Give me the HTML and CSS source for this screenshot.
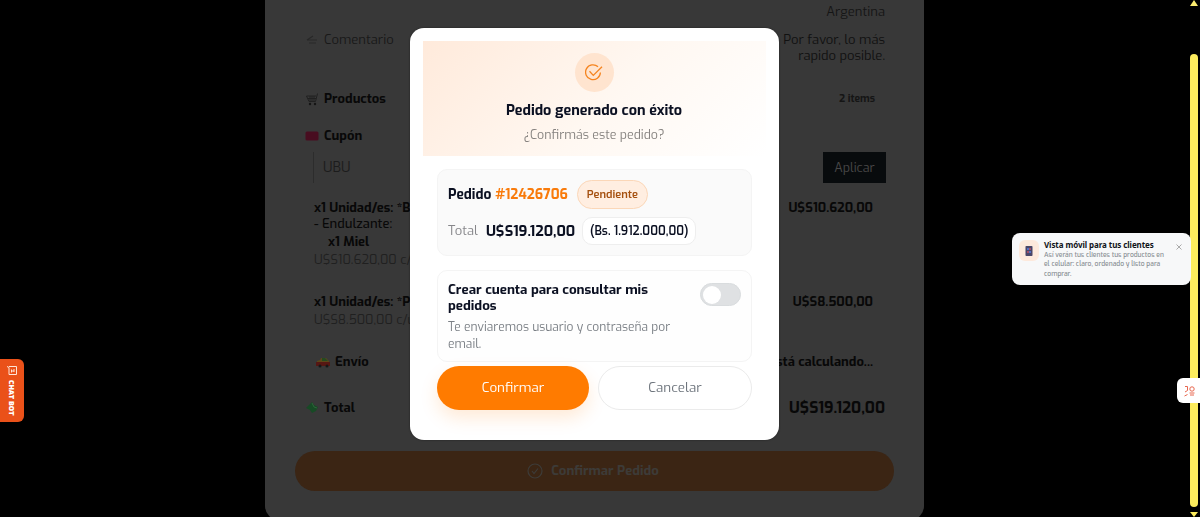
FILE: index.html
```html
<!doctype html>
<html lang="es">
  <head>
    <meta charset="UTF-8" />
    <meta name="viewport" content="width=device-width, initial-scale=1" />
    <title>Confirmar pedido</title>
    <link rel="stylesheet" href="styles.css">
  </head>
  <body>
    <!-- Resumen del pedido -->
    <main class="sheet">
      <div class="row row-address"><span>Argentina</span></div>
      <div class="row row-comment">
        <div class="label light">
          <svg class="icon" viewBox="0 0 14 14"><path d="M2 7l6-4M2 7h10M4 10h7" stroke="#282828" stroke-width="1.2" fill="none" /></svg>
          <span class="comment-label">Comentario</span>
        </div>
        <div class="comment-value">Por favor, lo más<br>rapido posible.</div>
      </div>
      <div class="row row-products">
        <div class="label">
          <svg class="icon" viewBox="0 0 14 14"><path d="M12.500 1.500l-2 8H4L1.500 4H11M3 6.500h8M5 4v5M7 4v5M9 4v5" stroke="#202020" fill="none" /><circle cx="5" cy="12" r="1.200" fill="#151515" /><circle cx="10" cy="12" r="1.200" fill="#151515" /></svg>
          <span class="products-label">Productos</span>
        </div>
        <span class="count">2 items</span>
      </div>
      <div class="row row-coupon">
        <div class="label">
          <svg class="icon" viewBox="0 0 14 14"><rect x=".5" y="2.500" width="13" height="9" rx="1.500" fill="#480d20" /></svg>
          <span class="coupon-label">Cupón</span>
        </div>
      </div>
      <div class="coupon">
        <span class="coupon-input">UBU</span>
        <span class="coupon-btn">Aplicar</span>
      </div>
      <div class="item item-first">
        <div class="item-info">
          <div class="item-name">x1 Unidad/es: *Budín</div>
          <div class="item-extra">- Endulzante:</div>
          <div class="item-option">x1 Miel</div>
          <div class="item-unit">U$S10.620,00 c/u</div>
        </div>
        <div class="item-price">U$S10.620,00</div>
      </div>
      <div class="item item-second">
        <div class="item-info">
          <div class="item-name">x1 Unidad/es: *Pan</div>
          <div class="item-unit">U$S8.500,00 c/u</div>
        </div>
        <div class="item-price">U$S8.500,00</div>
      </div>
      <div class="row row-shipping">
        <div class="label">
          <svg class="icon" viewBox="0 0 14 14"><path d="M1 6l3-1 1-2h5l3 3v2H1z" fill="#5d4718" /><path d="M6 3h3l3 3H6z" fill="#244a20" /><path d="M0 7h14v4H0z" fill="#561713" /><circle cx="4" cy="11" r="1.500" fill="#171717" /><circle cx="11" cy="11" r="1.500" fill="#171717" /></svg>
          <span class="shipping-label">Envío</span>
        </div>
        <span class="shipping-value">Se está calculando...</span>
      </div>
      <div class="row row-total">
        <div class="label">
          <svg class="icon" viewBox="0 0 14 14"><path d="M1 7l6-6 2 3 4 2-2 4-4 2-2-3z" fill="#174a25" /><path d="M7 2l2 4 3 1" stroke="#2d6539" fill="none" /></svg>
          <span class="total-label">Total</span>
        </div>
        <span class="total-value">U$S19.120,00</span>
      </div>
      <div class="submit">
        <svg class="submit-icon" viewBox="0 0 16 16"><circle cx="8" cy="8" r="7" /><path d="M5 8l2 2.500 4-5" /></svg>
        <span>Confirmar Pedido</span>
      </div>
    </main>

    <!-- Modal -->
    <div class="modal">
      <div class="hero">
        <div class="hero-icon">
          <svg viewBox="0 0 18 18"><path d="M13 2.800A7.400 7.400 0 1 0 15.400 8.500" /><path d="M4.500 7.200l3.800 4.200 8.700-8.600" /></svg>
        </div>
        <h2 class="hero-title">Pedido generado con éxito</h2>
        <p class="hero-text">¿Confirmás este pedido?</p>
      </div>
      <div class="modal-body">
        <div class="card order">
          <div class="order-row">
            <span class="order-name">Pedido</span>
            <span class="order-id">#12426706</span>
            <span class="badge">Pendiente</span>
          </div>
          <div class="order-row order-amount">
            <span class="amount-label">Total</span>
            <span class="amount">U$S19.120,00</span>
            <span class="converted">(Bs. 1.912.000,00)</span>
          </div>
        </div>
        <div class="card account">
          <div>
            <div class="account-title">Crear cuenta para consultar mis<br>pedidos</div>
            <div class="account-text">Te enviaremos usuario y contraseña por<br>email.</div>
          </div>
          <div class="switch"><div class="knob"></div></div>
        </div>
        <div class="actions">
          <button type="button" class="btn btn-primary">Confirmar</button>
          <button type="button" class="btn">Cancelar</button>
        </div>
      </div>
    </div>

    <!-- Barra de scroll -->
    <div class="scrollbar">
      <div class="arrow-up"></div>
      <div class="thumb"></div>
      <div class="arrow-down"></div>
    </div>

    <!-- Aviso flotante -->
    <div class="toast">
      <div class="toast-icon">
        <svg viewBox="0 0 8 10"><rect x=".5" width="7" height="10" rx=".8" fill="#4a4668" /><path d="M2 2h2v2H2zM4 5h2v2H4z" fill="#526fc4" /><path d="M4 2h2v2H4zM2 5h2v2H2z" fill="#a34e65" /></svg>
      </div>
      <div class="toast-content">
        <div class="toast-title">Vista móvil para tus clientes</div>
        <div class="toast-text">Así verán tus clientes tus productos en<br>el celular: claro, ordenado y listo para<br>comprar.</div>
      </div>
      <svg class="toast-close" viewBox="0 0 6 6"><path d="M.5.5l5 5M5.500.5l-5 5" /></svg>
    </div>

    <div class="chat">
      <svg class="chat-icon" viewBox="0 0 12 12"><path d="M1 1.500l2 1v7h7.500v-8H3M5.500 4.500v3M8 4v3M5.500 6H8" /></svg>
      <span class="chat-text">CHAT BOT</span>
    </div>

    <div class="side-tab">
      <svg viewBox="0 0 12 12"><path d="M1 1.500h2.500v4L1 7M.5 11l3-1.500" /><circle cx="8" cy="4" r="2.200" /><path d="M5.500 8h5M6 10h4" /></svg>
    </div>
  </body>
</html>
```

FILE: styles.css
```css
* {
  box-sizing: border-box;
}
body {
  margin: 0;
  height: 517px;
  overflow: hidden;
  background: #000;
  font-family: Exo, "Exo 2", Roboto, sans-serif;
  font-size: 13px;
  line-height: 16px;
  color: #080808;
}
span,
.item-name,
.item-unit {
  white-space: nowrap;
}

/* resumen */
.sheet {
  width: 659px;
  height: 520px;
  margin-left: 265px;
  padding: 4px 30px 0;
  background: #383838;
  border-radius: 0 0 14px 14px;
}
.row {
  display: flex;
  justify-content: space-between;
  align-items: flex-start;
  padding: 0 9px 0 10px;
}
.label {
  display: flex;
  align-items: center;
  gap: 5px;
  font-weight: 700;
}
.light {
  font-weight: 400;
  color: #191919;
}
.icon {
  width: 14px;
  height: 14px;
}
.row-address {
  justify-content: flex-end;
  height: 28px;
  color: #151515;
}
.row-comment {
  height: 59px;
}
.comment-value {
  text-align: right;
  color: #111;
}
.row-products {
  height: 37px;
}
.count {
  padding-right: 10px;
  font-size: 10.4px;
  font-weight: 700;
  line-height: 15px;
  color: #151515;
}
.row-coupon {
  height: 24px;
}
.coupon {
  display: flex;
  justify-content: space-between;
  height: 31px;
  margin: 0 8px 0 18px;
  border-left: 1px solid #2c2c2c;
}
.coupon-input {
  padding-left: 9px;
  font-size: 14px;
  line-height: 32px;
  color: #1c1c1c;
}
.coupon-btn {
  width: 63px;
  background: #080b0d;
  color: #484848;
  font-size: 12.6px;
  line-height: 31px;
  text-align: center;
}
.item {
  display: flex;
  justify-content: space-between;
  padding: 0 21px 0 19px;
}
.item-first {
  height: 94px;
  margin-top: 17px;
}
.item-second {
  height: 60px;
}
.item-name,
.item-price {
  font-weight: 700;
}
.item-extra {
  font-weight: 500;
}
.item-option {
  margin-top: 2px;
  padding-left: 14px;
  font-weight: 700;
}
.item-unit {
  margin-top: 2px;
  font-size: 12.8px;
  color: #202020;
}
.row-shipping {
  height: 46px;
  padding: 0 21px;
}
.shipping-value,
.total-value {
  font-weight: 700;
}
.row-total {
  height: 51px;
}
.total-value {
  font-size: 15.6px;
}
.submit {
  display: flex;
  justify-content: center;
  align-items: center;
  gap: 8px;
  height: 40px;
  padding-right: 3px;
  border-radius: 20px;
  background: #3b2514;
  color: #3d3b38;
  font-size: 13.2px;
  font-weight: 700;
}
.submit-icon {
  width: 16px;
  height: 16px;
  fill: none;
  stroke: #3d3b38;
  stroke-width: 1.2;
}

/* modal */
.modal {
  position: fixed;
  top: 28px;
  left: 410px;
  width: 369px;
  height: 412px;
  padding: 13px;
  background: #fff;
  border-radius: 14px;
  box-shadow: 0 0 2px rgba(0, 0, 0, 0.5);
  color: #0b1022;
}
.hero {
  display: flex;
  flex-direction: column;
  align-items: center;
  height: 115px;
  padding: 12px 1px 0 0;
  background: linear-gradient(135deg, #ffeadb, #fff8f2 55%, #fff);
}
.hero-icon {
  display: flex;
  align-items: center;
  justify-content: center;
  width: 39px;
  height: 39px;
  border-radius: 50%;
  background: #ffe4cf;
}
.hero-icon svg {
  width: 18px;
  height: 18px;
  fill: none;
  stroke: #f5841f;
  stroke-width: 1.3;
}
.hero-title {
  margin: 9px 0 0;
  font-size: 14.4px;
  font-weight: 700;
  line-height: 20px;
}
.hero-text {
  margin: 6px 0 0;
  font-size: 12.4px;
  color: #86827f;
}
.modal-body {
  padding: 13px 14px 0;
}
.card {
  border: 1px solid #f4f4f4;
  border-radius: 10px;
}
.order {
  height: 87px;
  padding: 10px;
  background: #fafafa;
}
.order-row {
  display: flex;
  align-items: center;
  height: 29px;
}
.order-name,
.order-id {
  font-size: 13.7px;
  font-weight: 700;
  line-height: 15px;
}
.order-id {
  margin-left: 4px;
  color: #f97b0b;
}
.badge {
  width: 71px;
  height: 29px;
  margin-left: 9px;
  border: 1px solid #fbd7b8;
  border-radius: 15px;
  background: #ffeee1;
  color: #a5500f;
  font-size: 11.1px;
  font-weight: 600;
  line-height: 27px;
  text-align: center;
}
.order-amount {
  margin-top: 7px;
}
.amount-label {
  color: #86868a;
}
.amount {
  margin-left: 8px;
  font-size: 14.5px;
  font-weight: 700;
}
.converted {
  width: 114px;
  height: 28px;
  margin-left: 7px;
  border: 1px solid #eee;
  border-radius: 10px;
  background: #fff;
  font-size: 12px;
  font-weight: 600;
  line-height: 26px;
  text-align: center;
}
.account {
  display: flex;
  justify-content: space-between;
  height: 92px;
  margin-top: 14px;
  padding: 11px 10px;
  background: #fefefe;
}
.account-title {
  font-size: 13.4px;
  font-weight: 700;
}
.account-text {
  margin-top: 5px;
  font-size: 12px;
  line-height: 17px;
  color: #7a7f85;
}
.switch {
  width: 41px;
  height: 23px;
  margin-top: 1px;
  padding: 2px;
  border: 1px solid #d9dcde;
  border-radius: 12px;
  background: #dfe1e3;
}
.knob {
  width: 18px;
  height: 18px;
  border-radius: 50%;
  background: #fff;
}
.actions {
  display: flex;
  gap: 9px;
  margin-top: 4px;
}
.btn {
  flex: 1;
  height: 44px;
  padding: 0 0 2px;
  border: 1px solid #ebebeb;
  border-radius: 22px;
  background: #fff;
  color: #6d747c;
  font-family: inherit;
  font-size: 13.4px;
}
.btn-primary {
  border: none;
  background: #ff7b00;
  color: #fff;
  box-shadow: 0 8px 18px rgba(255, 123, 0, 0.16);
}

/* elementos flotantes */
.scrollbar {
  position: fixed;
  top: 0;
  right: 2px;
  width: 8px;
  height: 517px;
}
.arrow-up {
  height: 6px;
  background: #fcec70;
  clip-path: polygon(50% 0, 100% 100%, 0 100%);
}
.thumb {
  height: 453px;
  margin-top: 48px;
  border-radius: 4px;
  background: #fcec5d;
}
.arrow-down {
  height: 5px;
  margin-top: 5px;
  background: #fcec5d;
  clip-path: polygon(0 0, 100% 0, 50% 100%);
}
.toast {
  position: fixed;
  top: 233px;
  left: 1012px;
  display: flex;
  width: 179px;
  height: 52px;
  padding: 7px;
  border-radius: 8px;
  background: #f7f8f9;
}
.toast-icon {
  display: flex;
  align-items: center;
  justify-content: center;
  width: 20px;
  height: 21px;
  border-radius: 6px;
  background: #fde9dc;
}
.toast-icon svg {
  width: 8px;
  height: 10px;
}
.toast-content {
  margin-left: 5px;
  white-space: nowrap;
}
.toast-title {
  font-family: "Noto Sans", sans-serif;
  font-size: 8px;
  font-weight: 700;
  line-height: 10px;
  letter-spacing: -0.08px;
  color: #101318;
}
.toast-text {
  font-size: 6.7px;
  font-weight: 500;
  line-height: 9.4px;
  color: #858b90;
}
.toast-close {
  position: absolute;
  top: 11px;
  right: 9px;
  width: 6px;
  height: 6px;
  stroke: #888;
  stroke-width: 0.7;
}
.chat {
  position: fixed;
  top: 359px;
  left: 0;
  display: flex;
  flex-direction: column;
  align-items: center;
  width: 24px;
  height: 63px;
  padding-top: 6px;
  border-radius: 0 6px 6px 0;
  background: #ea5119;
}
.chat-icon {
  width: 12px;
  height: 12px;
  fill: none;
  stroke: #ffe5d8;
}
.chat-text {
  margin-top: 3px;
  writing-mode: vertical-rl;
  font-size: 7.5px;
  font-weight: 900;
  line-height: 10px;
  color: #fff;
}
.side-tab {
  position: fixed;
  top: 378px;
  right: 0;
  width: 23px;
  height: 25px;
  padding: 7px 4px 6px 7px;
  border-radius: 6px 0 0 6px;
  background: #fff;
}
.side-tab svg {
  display: block;
  width: 12px;
  height: 12px;
  fill: none;
  stroke: #e8674f;
}
```
